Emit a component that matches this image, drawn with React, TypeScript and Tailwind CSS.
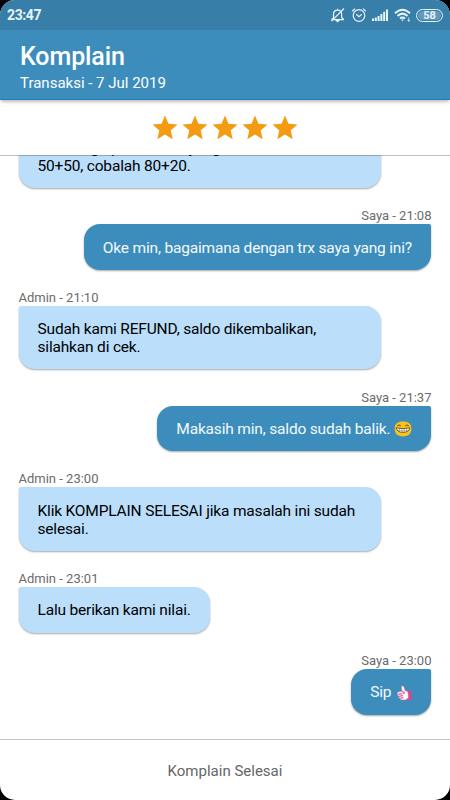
import clsx from "clsx";
import { ReactNode } from "react";

interface Message {
  from: "Admin" | "Saya";
  time?: string;
  lines: string[];
  emoji?: ReactNode;
}

const GrinEmoji = (
  <svg viewBox="0 0 18 16" className="inline-block w-[18px] h-4 -mt-[2px]">
    <path
      d="M9 .6c5.600 0 8.300 2.300 8.300 7.200 0 5-2.600 7.600-8.300 7.600S.7 12.800.7 7.800C.7 2.900 3.400.6 9 .6z"
      fill="#fcc21b"
    />
    <path
      d="M3.200 4.900Q5 3 6.800 4.900M11.200 4.900Q13 3 14.800 4.900"
      fill="none"
      stroke="#6b4a20"
      strokeWidth="1"
    />
    <path
      d="M2.200 6.800Q9 8.600 15.800 6.800Q15.200 11.300 9 11.300Q2.800 11.300 2.200 6.800z"
      fill="#fff"
      stroke="#5d4a26"
      strokeWidth=".9"
    />
    <path
      d="M3.200 9.100Q9 10.300 14.800 9.100M5.500 7.700v2.900M7.900 8v3M10.200 8v3M12.500 7.700v2.900"
      fill="none"
      stroke="#8a7a50"
      strokeWidth=".5"
    />
  </svg>
);

const ThumbEmoji = (
  <svg
    viewBox="0 0 16 16"
    className="inline-block w-4 h-4 -mt-[1px] ml-[1px]"
  >
    <path d="M12 6.300l3.200-.5v9.200l-3.700.5z" fill="#ee3c86" />
    <path
      d="M5.300 1.200c1.500-.8 2.700.2 3 1.700l.7 2.700 2.900 1.200.5 6.200-3.300 2-3.600-.2c-1.200 0-1.500-.8-1.300-1.600-1.200-.1-1.700-1-1.300-1.900-1.100-.2-1.500-1.200-1-2-.9-.6-.7-2 .4-2.200l3.800-.8z"
      fill="#fff"
      stroke="#e8679b"
      strokeWidth=".5"
    />
    <path
      d="M2.300 9.200l4-.5M3 11.200l3.800-.5M4.300 13.200l3-.5M6.200 6.700l2.200.5-.6 2"
      fill="none"
      stroke="#dd2877"
      strokeWidth="1"
    />
  </svg>
);

const messages: Message[] = [
  {
    from: "Admin",
    lines: ["Jika harga pulsa lama yang dicek", "50+50, cobalah 80+20."],
  },
  {
    from: "Saya",
    time: "21:08",
    lines: ["Oke min, bagaimana dengan trx saya yang ini?"],
  },
  {
    from: "Admin",
    time: "21:10",
    lines: ["Sudah kami REFUND, saldo dikembalikan,", "silahkan di cek."],
  },
  {
    from: "Saya",
    time: "21:37",
    lines: ["Makasih min, saldo sudah balik. "],
    emoji: GrinEmoji,
  },
  {
    from: "Admin",
    time: "23:00",
    lines: ["Klik KOMPLAIN SELESAI jika masalah ini sudah", "selesai."],
  },
  { from: "Admin", time: "23:01", lines: ["Lalu berikan kami nilai."] },
  { from: "Saya", time: "23:00", lines: ["Sip "], emoji: ThumbEmoji },
];

const StatusBar = () => (
  <div className="flex h-[30px] shrink-0 items-center justify-between bg-[#377ea8] pl-[7px] pr-[7px] text-[#e8f3fa]">
    <span className="text-[14px] font-bold leading-none tracking-[-0.4px]">
      23:47
    </span>
    <div className="flex items-center">
      <svg
        viewBox="0 0 16 16"
        className="mr-[5px] h-4 w-4"
        fill="none"
        stroke="currentColor"
        strokeWidth="1.200"
      >
        <path d="M3.500 11.500V7.200c0-2.400 1.500-4 4-4 2.600 0 4.100 1.600 4.100 4v3.300l1.800 1.500v.6H2v-.6zM6.200 13.300h2.800l-1.400 1.300zM7.600 3.200V1.800M14 1.500L1.500 14.200" />
      </svg>
      <svg
        viewBox="0 0 16 16"
        className="mr-[5px] h-4 w-4"
        fill="none"
        stroke="currentColor"
        strokeWidth="1.200"
      >
        <circle cx="8" cy="8.500" r="5.800" />
        <path d="M5.200 7.300L8 9.600l2.800-2.300M1.200 4.200l2.800-2.600M14.800 4.200L12 1.600" />
      </svg>
      <svg viewBox="0 0 16 12" className="mr-[6px] h-3 w-4" fill="currentColor">
        <path d="M0 9.500h2V12H0zM2.800 8.500h2V12h-2zM5.600 7h2v5h-2zM8.400 5h2v7h-2zM11.200 2.800h2V12h-2zM14 .5h2V12h-2z" />
      </svg>
      <svg
        viewBox="0 0 18 14"
        className="mr-[4px] h-[14px] w-[18px]"
        fill="none"
        stroke="currentColor"
        strokeWidth="2"
      >
        <path d="M1 5.200Q8.500-1.800 16 5.200M3.500 8Q8.500 3.200 13.500 8M6 10.600Q8.500 8.400 11 10.600" />
        <path d="M7 11.400h3l-1.500 1.800z" fill="currentColor" stroke="none" />
        <path d="M14.700 9.500v4M13.500 12l1.200 1.300 1.200-1.300" strokeWidth=".8" />
      </svg>
      <span className="flex h-[13px] w-[27px] items-center justify-center rounded-full border border-[#e8f3fa] p-[1px]">
        <span className="flex h-full w-full items-center justify-center rounded-full bg-[#5f9abc] text-[11px] font-bold leading-none">
          58
        </span>
      </span>
    </div>
  </div>
);

// the divider lies over the top pixel of the scrolled chat
const Rating = () => (
  <div className="z-10 -mb-px flex h-14 shrink-0 items-center justify-center border-b border-black/25">
    {[1, 2, 3, 4, 5].map((star) => (
      <svg key={star} viewBox="0 0 24 24" className="h-[30px] w-[30px]">
        <path
          fill="#f39c12"
          d="M12 17.270L18.180 21l-1.640-7.030L22 9.240l-7.190-.61L12 2 9.190 8.630 2 9.240l5.460 4.730L5.820 21z"
        />
      </svg>
    ))}
  </div>
);

const Bubble = ({ message }: { message: Message }) => {
  const mine = message.from === "Saya";

  return (
    <div className={clsx("flex flex-col", mine ? "items-end" : "items-start")}>
      {message.time && (
        <span
          className={clsx(
            "text-[13px] leading-[17px] text-[#6b6b6b]",
            mine && "-mr-[0.5px]"
          )}
        >
          {`${message.from} - ${message.time}`}
        </span>
      )}
      <div
        className={clsx(
          "rounded-[16px] px-[19px] pt-[15.500px] pb-[12.500px] text-[15.500px] leading-[17.700px] tracking-[-0.180px] whitespace-pre shadow-[0_1px_2px_rgba(0,0,0,0.35)]",
          mine
            ? "rounded-tr-[2px] bg-[#3c8dbc] text-[#f4f9fc]"
            : "rounded-tl-[2px] bg-[#bbdefb] text-black",
          message.lines.length > 1 && "w-[362.500px]"
        )}
      >
        {message.lines.map((line) => (
          <p key={line} className="h-[17.700px]">
            {line}
            {message.emoji}
          </p>
        ))}
      </div>
    </div>
  );
};

export default function App() {
  return (
    <div className="h-screen bg-black font-[Roboto,sans-serif]">
      <div className="flex h-full flex-col overflow-hidden rounded-[15px] bg-white">
        <StatusBar />
        <header className="z-10 h-[70px] shrink-0 border-b border-[#1d7fb3] bg-[#3c8dbc] px-5 pt-[12px] text-white shadow-[0_3px_3px_-1px_rgba(0,0,0,0.25)]">
          <h1 className="text-[25px] font-medium leading-[30px] tracking-[-0.1px]">
            Komplain
          </h1>
          <p className="text-[15px] leading-[22px]">Transaksi - 7 Jul 2019</p>
        </header>
        <Rating />
        <main className="flex min-h-0 flex-1 flex-col justify-end gap-[19.200px] overflow-hidden pl-[18.500px] pr-[19px] pb-[24.500px]">
          {messages.map((message, index) => (
            <Bubble key={index} message={message} />
          ))}
        </main>
        <button className="h-[61px] shrink-0 border-t border-[#c4c4c4] pt-[2px] text-[15px] text-[#666]">
          Komplain Selesai
        </button>
      </div>
    </div>
  );
}
